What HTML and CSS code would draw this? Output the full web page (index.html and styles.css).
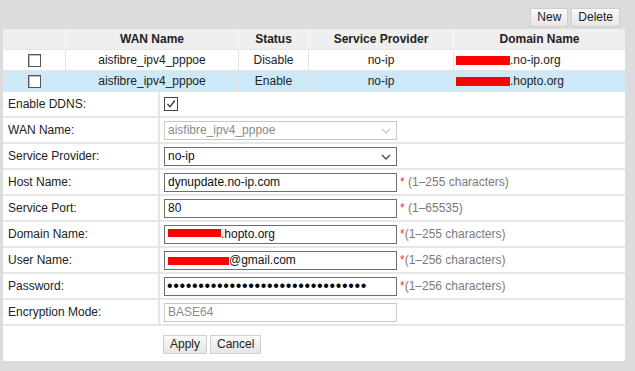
FILE: index.html
```html
<!DOCTYPE html>
<html>
<head>
<meta charset="utf-8">
<link rel="stylesheet" href="styles.css">
</head>
<body>
<div class="page">
  <div class="toolbar">
    <button class="btn">New</button>
    <button class="btn">Delete</button>
  </div>
  <table class="list">
    <thead>
      <tr>
        <th class="c-chk"></th>
        <th class="c-wan">WAN Name</th>
        <th class="c-status">Status</th>
        <th class="c-prov">Service Provider</th>
        <th class="c-dom">Domain Name</th>
      </tr>
    </thead>
    <tbody>
      <tr>
        <td><span class="cb"></span></td>
        <td>aisfibre_ipv4_pppoe</td>
        <td>Disable</td>
        <td>no-ip</td>
        <td class="left"><span class="redact r1"></span>.no-ip.org</td>
      </tr>
      <tr class="sel">
        <td><span class="cb"></span></td>
        <td>aisfibre_ipv4_pppoe</td>
        <td>Enable</td>
        <td>no-ip</td>
        <td class="left"><span class="redact r1"></span>.hopto.org</td>
      </tr>
    </tbody>
  </table>
  <table class="form">
    <tr>
      <td class="lbl">Enable DDNS:</td>
      <td class="val"><span class="cb checked"><svg width="10" height="10" viewBox="0 0 10 10"><path d="M1.5 5 L4 7.8 L8.8 1.5" fill="none" stroke="#333" stroke-width="1.3"/></svg></span></td>
    </tr>
    <tr>
      <td class="lbl">WAN Name:</td>
      <td class="val"><div class="field disabled sel-field">aisfibre_ipv4_pppoe<svg class="chev" width="10" height="6" viewBox="0 0 10 6"><path d="M1 1 L5 5 L9 1" fill="none" stroke="#c4c4c4" stroke-width="1.2"/></svg></div></td>
    </tr>
    <tr>
      <td class="lbl">Service Provider:</td>
      <td class="val"><div class="field sel-field">no-ip<svg class="chev" width="10" height="6" viewBox="0 0 10 6"><path d="M1 1 L5 5 L9 1" fill="none" stroke="#444" stroke-width="1.3"/></svg></div></td>
    </tr>
    <tr>
      <td class="lbl">Host Name:</td>
      <td class="val"><div class="field">dynupdate.no-ip.com</div><span class="hint"><span class="req">*</span> (1–255 characters)</span></td>
    </tr>
    <tr>
      <td class="lbl">Service Port:</td>
      <td class="val"><div class="field">80</div><span class="hint"><span class="req">*</span> (1–65535)</span></td>
    </tr>
    <tr>
      <td class="lbl">Domain Name:</td>
      <td class="val"><div class="field"><span class="redact r2"></span>.hopto.org</div><span class="hint"><span class="req">*</span>(1–255 characters)</span></td>
    </tr>
    <tr>
      <td class="lbl">User Name:</td>
      <td class="val"><div class="field"><span class="redact r3"></span>@gmail.com</div><span class="hint"><span class="req">*</span>(1–256 characters)</span></td>
    </tr>
    <tr>
      <td class="lbl">Password:</td>
      <td class="val"><div class="field pw">••••••••••••••••••••••••••••••••</div><span class="hint"><span class="req">*</span>(1–256 characters)</span></td>
    </tr>
    <tr>
      <td class="lbl">Encryption Mode:</td>
      <td class="val"><div class="field disabled">BASE64</div></td>
    </tr>
    <tr class="actions">
      <td class="lbl"></td>
      <td class="val"><button class="btn">Apply</button><button class="btn">Cancel</button></td>
    </tr>
  </table>
</div>
</body>
</html>
```
FILE: styles.css
```css
html, body {
  margin: 0;
  padding: 0;
  background: #dcdcdc;
  font-family: "Liberation Sans", Arial, sans-serif;
  font-size: 12px;
  color: #222;
}
.page {
  width: 622px;
  margin-left: 3px;
}
.toolbar {
  height: 29px;
  display: flex;
  justify-content: flex-end;
  align-items: flex-start;
  gap: 3px;
  padding-right: 5px;
  box-sizing: border-box;
  padding-top: 8px;
}
.btn {
  font-family: "Liberation Sans", Arial, sans-serif;
  font-size: 12px;
  color: #222;
  height: 19px;
  padding: 0 6px;
  border: 1px solid #cfcfcf;
  background: linear-gradient(#fafafa, #e6e6e6);
  border-radius: 0;
  margin: 0;
  line-height: 17px;
}
.list {
  width: 622px;
  border-collapse: collapse;
  background: #fff;
  table-layout: fixed;
}
.list th, .list td {
  height: 20px;
  padding: 0;
  text-align: center;
  border-right: 1px solid #e4e4e4;
  border-bottom: 1px solid #e4e4e4;
  white-space: nowrap;
  overflow: hidden;
}
.list th {
  background: #efefef;
  font-weight: bold;
  color: #222;
  border-right-color: #fafafa;
}
.list th:last-child, .list td:last-child { border-right: none; }
.c-chk { width: 62px; }
.c-wan { width: 172px; }
.c-status { width: 69px; }
.c-prov { width: 144px; }
.list td.left { text-align: left; padding-left: 2px; }
.list tr.sel td { background: #cde9f7; }
.cb {
  display: inline-block;
  width: 11px;
  height: 11px;
  border: 1px solid #555;
  background: #fff;
  vertical-align: middle;
  box-shadow: inset 1px 1px 0 #bbb;
}
.cb.checked {
  box-shadow: none;
  border-color: #444;
  width: 12px;
  height: 12px;
}
.cb.checked svg { display: block; margin: 1px; }
.redact {
  display: inline-block;
  background: #f00;
  vertical-align: middle;
}
.r1 { width: 54px; height: 9px; margin-top: -1px; }
.r2 { width: 53px; height: 8px; margin-top: -3px; }
.r3 { width: 61px; height: 8px; margin-top: 1px; }
.form {
  width: 622px;
  border-collapse: collapse;
  background: #fff;
}
.form td {
  height: 24px;
  padding: 0;
  border-bottom: 2px solid #e6e6e6;
  white-space: nowrap;
}
.form td.lbl {
  width: 150px;
  padding-left: 5px;
  border-right: 2px solid #e6e6e6;
}
.form td.val { padding-left: 4px; }
.field {
  display: inline-flex;
  align-items: center;
  box-sizing: border-box;
  width: 233px;
  height: 19px;
  border: 1px solid #6e6e6e;
  padding-left: 3px;
  color: #111;
  vertical-align: middle;
}
.field.disabled {
  border-color: #c8c8c8;
  color: #8a8a8a;
}
.sel-field { justify-content: space-between; padding-right: 5px; }
.chev { margin-top: 2px; }
.pw {
  font-size: 16px;
  letter-spacing: 0.65px;
  padding-left: 2px;
  color: #000;
}
.hint {
  color: #7a7a7a;
  margin-left: 3px;
  vertical-align: middle;
}
.req { color: #e33; }
.actions td { height: 34px; border-bottom: none; }
.actions td.lbl { border-right: none; }
.actions td.val { padding-top: 1px; }
.actions .btn { margin-right: 3px; height: 19px; }
```
